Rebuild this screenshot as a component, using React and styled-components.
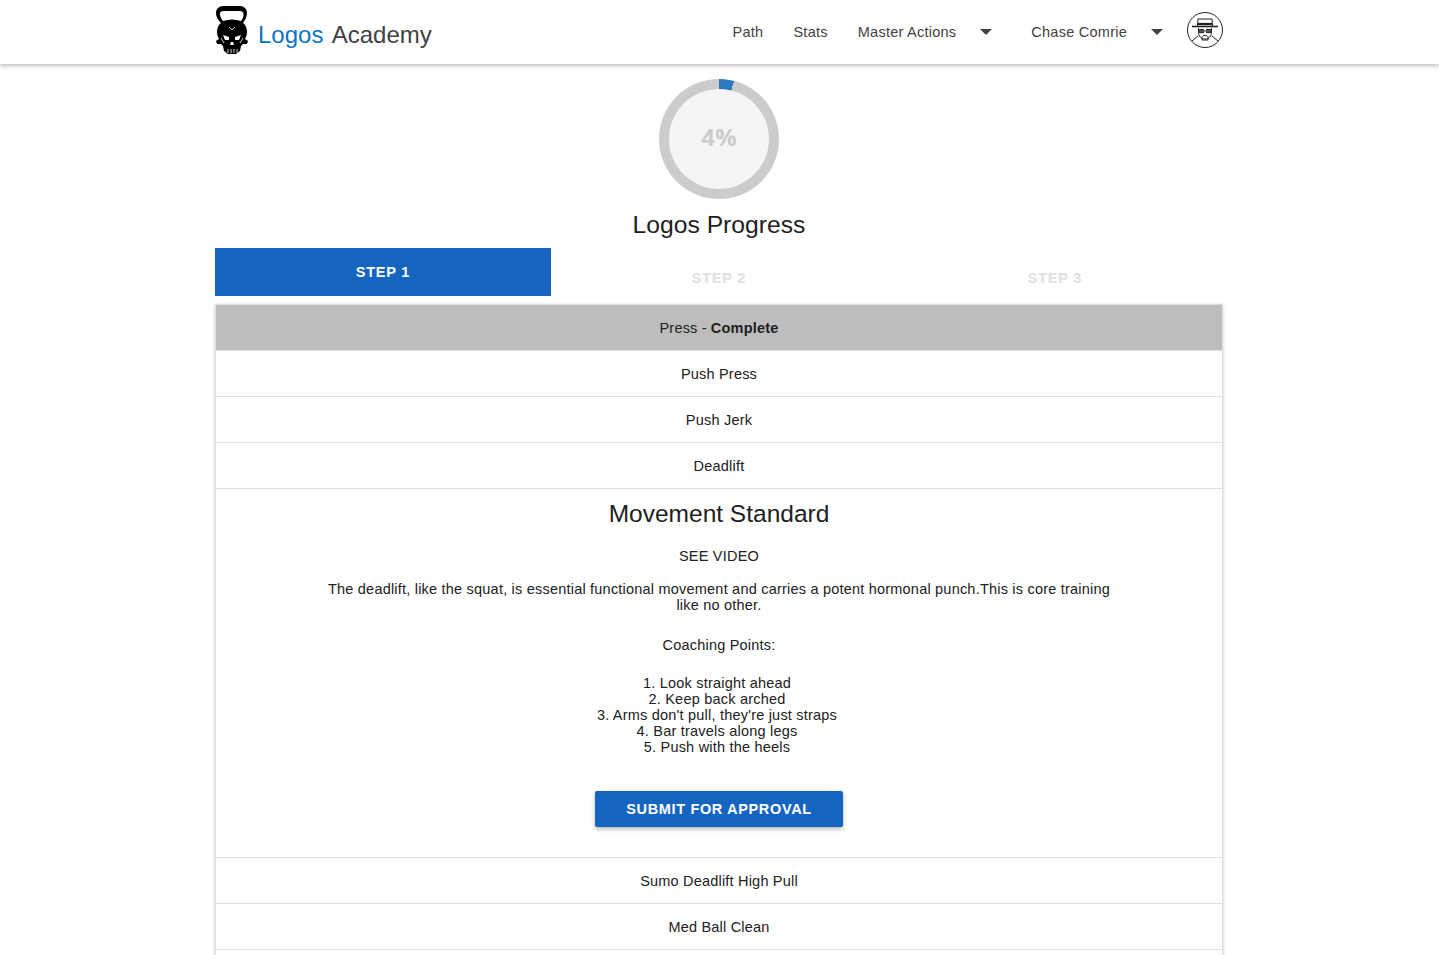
import React from "react";
import styled, { createGlobalStyle } from "styled-components";

const GlobalStyle = createGlobalStyle`
  html, body {
    margin: 0;
    padding: 0;
    background: #fff;
    overflow: hidden;
  }
  body {
    font-family: "Liberation Sans", Arial, sans-serif;
    color: #212121;
  }
  * {
    box-sizing: border-box;
  }
`;

const SkullLogo = () => (
  <svg width="34" height="50" viewBox="0 0 34 50">
    <path
      fill="#000"
      fillRule="evenodd"
      d="M8 1 H25 C29 1 32 4 32 8 C32 12 30 15 28 18 C31 20 32 24 32 27 C32 30 31 32 30 34 L33 36 L32 39 L28 39 L26 41 L25 46 L21 49 H13 L9 46 L8 41 L6 39 L2 39 L1 36 L4 34 C3 32 2 30 2 27 C2 24 3 20 6 18 C3 15 1 12 1 8 C1 4 4 1 8 1 Z M9 6 C6 6 5 7 5 9 C5 11 6 14 8 16 C11 15 14 14.5 17 14.5 C20 14.5 23 15 26 16 C28 14 28.5 11 28.5 9 C28.5 7 27 6 25 6 Z"
    />
    <path fill="#fff" d="M8 30 L14 32 L14 35 L10 35 Z M26 30 L20 32 L20 35 L24 35 Z M16 37 H18 L19 40 H15 Z" />
    <path
      fill="none"
      stroke="#fff"
      strokeWidth="0.8"
      d="M13 44 V48 M16 44 V48 M19 44 V48 M22 44 V48 M14 22 L17 25 L20 22 M6 33 L9 38 M28 33 L25 38"
    />
  </svg>
);

const Avatar = () => (
  <svg width="36" height="36" viewBox="0 0 36 36" fill="none" stroke="#222" strokeWidth="1">
    <circle cx="18" cy="18" r="17.5" />
    <path d="M10.5 14 L11 7 H25 L25.5 14" />
    <path d="M10.7 12 H25.3" strokeWidth="2.2" />
    <path d="M5 14.5 H31" strokeWidth="1.6" />
    <path d="M11.5 16 V20 C11.5 24 14 27 18 27 C22 27 24.5 24 24.5 20 V16" />
    <rect x="12" y="17.5" width="5" height="3.2" rx="1" fill="#555" />
    <rect x="19" y="17.5" width="5" height="3.2" rx="1" fill="#555" />
    <path d="M15 25.5 C15 22.5 21 22.5 21 25.5 V28 H15 Z" />
    <path d="M11 24 L5 29 M25 24 L31 29" />
  </svg>
);

const App = () => {
  const items = ["Push Press", "Push Jerk", "Deadlift"];
  const points = [
    "1. Look straight ahead",
    "2. Keep back arched",
    "3. Arms don't pull, they're just straps",
    "4. Bar travels along legs",
    "5. Push with the heels",
  ];
  return (
    <>
      <GlobalStyle />
      <Header>
        <HeaderInner>
          <Brand>
            <SkullLogo />
            <BrandName>
              <BrandBlue>Logos</BrandBlue> Academy
            </BrandName>
          </Brand>
          <Nav>
            <NavLink>Path</NavLink>
            <NavLink>Stats</NavLink>
            <NavLink>Master Actions</NavLink>
            <Caret />
            <NavLink $left={39}>Chase Comrie</NavLink>
            <Caret />
            <AvatarWrap>
              <Avatar />
            </AvatarWrap>
          </Nav>
        </HeaderInner>
      </Header>
      <Main>
        <ProgressRing>
          <ProgressInner>4%</ProgressInner>
        </ProgressRing>
        <ProgressTitle>Logos Progress</ProgressTitle>
        <Tabs>
          <Tab $active>STEP 1</Tab>
          <Tab>STEP 2</Tab>
          <Tab>STEP 3</Tab>
        </Tabs>
        <Card>
          <Row $head>
            Press - <strong>Complete</strong>
          </Row>
          {items.map(item => (
            <Row key={item}>{item}</Row>
          ))}
          <Detail>
            <DetailTitle>Movement Standard</DetailTitle>
            <SeeVideo>SEE VIDEO</SeeVideo>
            <Description>
              The deadlift, like the squat, is essential functional movement and
              carries a potent hormonal punch.This is core training like no
              other.
            </Description>
            <Coaching>Coaching Points:</Coaching>
            <Points>
              {points.map(point => (
                <div key={point}>{point}</div>
              ))}
            </Points>
            <SubmitButton>SUBMIT FOR APPROVAL</SubmitButton>
          </Detail>
          <Row>Sumo Deadlift High Pull</Row>
          <Row>Med Ball Clean</Row>
          <Row />
        </Card>
      </Main>
    </>
  );
};

export default App;

const Header = styled.header`
  height: 64px;
  background: #fff;
  box-shadow: 0 2px 4px rgba(0, 0, 0, 0.25);
  position: relative;
`;

const HeaderInner = styled.div`
  width: 1008px;
  margin-left: 215px;
  height: 100%;
  display: flex;
  justify-content: space-between;
  align-items: flex-start;
`;

const Brand = styled.div`
  display: flex;
  align-items: flex-start;
  padding-top: 5px;
  gap: 9px;
`;

const BrandName = styled.div`
  font-size: 24px;
  line-height: 30px;
  color: #424242;
  padding-top: 15px;
  word-spacing: 3px;
`;

const BrandBlue = styled.span`
  color: #0a75c2;
`;

const Nav = styled.nav`
  display: flex;
  align-items: center;
  height: 60px;
`;

const NavLink = styled.a`
  font-size: 14.5px;
  letter-spacing: 0.25px;
  color: #424242;
  margin-left: ${props => props.$left || 30}px;
  margin-top: 3px;
`;

const Caret = styled.span`
  width: 0;
  height: 0;
  margin-left: 24px;
  margin-top: 3px;
  border-left: 6px solid transparent;
  border-right: 6px solid transparent;
  border-top: 6px solid #424242;
`;

const AvatarWrap = styled.div`
  width: 36px;
  height: 36px;
  margin-left: 24px;
  margin-top: -1px;
`;

const Main = styled.main`
  width: 1008px;
  margin-left: 215px;
  display: flex;
  flex-direction: column;
  align-items: center;
  padding-top: 15px;
`;

const ProgressRing = styled.div`
  width: 120px;
  height: 120px;
  border-radius: 50%;
  background: conic-gradient(#2b7bbf 0 4%, #ccc 4% 100%);
  display: flex;
  align-items: center;
  justify-content: center;
`;

const ProgressInner = styled.div`
  width: 100px;
  height: 100px;
  border-radius: 50%;
  background: #f5f5f5;
  color: #ccc;
  font-size: 24px;
  font-weight: 700;
  font-family: "Open Sans", sans-serif;
  padding-bottom: 6px;
  display: flex;
  align-items: center;
  justify-content: center;
`;

const ProgressTitle = styled.h2`
  margin: 10px 0 0;
  font-size: 24.7px;
  line-height: 32px;
  font-weight: 400;
  color: #212121;
`;

const Tabs = styled.div`
  width: 100%;
  display: grid;
  grid-template-columns: repeat(3, 1fr);
  margin-top: 7px;
`;

const Tab = styled.div`
  height: 48px;
  display: flex;
  align-items: center;
  justify-content: center;
  font-size: 14.5px;
  font-weight: 700;
  letter-spacing: 0.8px;
  color: ${props => (props.$active ? "#fff" : "#e0e0e0")};
  background: ${props => (props.$active ? "#1565c0" : "transparent")};
  padding-top: ${props => (props.$active ? "0" : "12px")};
  padding-bottom: ${props => (props.$active ? "1px" : "0")};
`;

const Card = styled.section`
  width: 100%;
  margin-top: 8px;
  border: 1px solid #e0e0e0;
  box-shadow: 0 1px 4px rgba(0, 0, 0, 0.2);
  background: #fff;
`;

const Row = styled.div`
  height: 46px;
  display: flex;
  align-items: center;
  justify-content: center;
  gap: 4px;
  font-size: 14.5px;
  letter-spacing: 0.2px;
  color: #212121;
  border-bottom: 1px solid #e0e0e0;
  background: ${props => (props.$head ? "#bdbdbd" : "#fff")};
`;

const Detail = styled.div`
  display: flex;
  flex-direction: column;
  align-items: center;
  text-align: center;
  padding: 7px 100px 30px;
  border-bottom: 1px solid #e0e0e0;
  font-size: 14.5px;
  letter-spacing: 0.21px;
  line-height: 16px;
  color: #212121;
`;

const DetailTitle = styled.h3`
  margin: 0;
  font-size: 24.5px;
  letter-spacing: 0;
  line-height: 36px;
  font-weight: 400;
`;

const SeeVideo = styled.div`
  margin-top: 16px;
`;

const Description = styled.p`
  margin: 17px 0 0;
  width: 800px;
`;

const Coaching = styled.div`
  margin-top: 24px;
`;

const Points = styled.div`
  margin-top: 22px;
  padding-right: 4px;
`;

const SubmitButton = styled.button`
  margin-top: 36px;
  width: 248px;
  height: 36px;
  border: none;
  border-radius: 2px;
  background: #1565c0;
  color: #fff;
  font-family: inherit;
  font-size: 14.5px;
  font-weight: 700;
  letter-spacing: 0.65px;
  box-shadow: 0 2px 4px rgba(0, 0, 0, 0.3);
`;
